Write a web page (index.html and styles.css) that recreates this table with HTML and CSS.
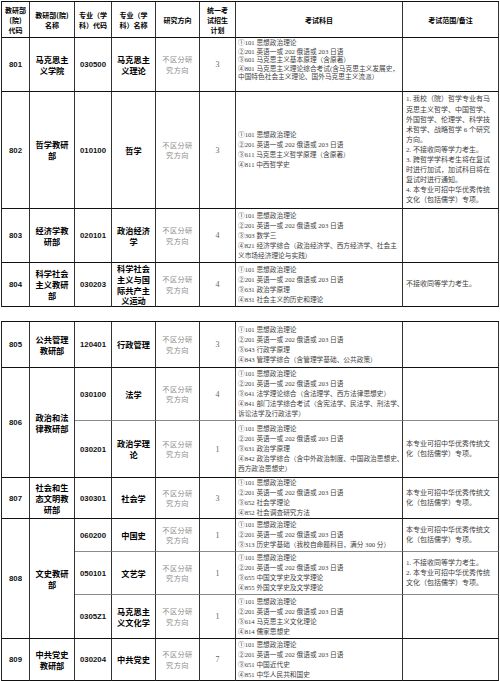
FILE: index.html
```html
<!DOCTYPE html>
<html lang="zh-CN">
<head>
<meta charset="utf-8">
<title>考试科目</title>
<link rel="stylesheet" href="styles.css">
</head>
<body>
<table class="grid first">
<colgroup>
<col class="c1"><col class="c2"><col class="c3"><col class="c4"><col class="c5"><col class="c6"><col class="c7"><col class="c8">
</colgroup>
<tr class="h36">
<th>教研部<br>(院)<br>代码</th>
<th>教研部(院)<br>名称</th>
<th>专业（学<br>科）代码</th>
<th>专业（学<br>科）名称</th>
<th>研究方向</th>
<th>统一考<br>试招生<br>计划</th>
<th>考试科目</th>
<th>考试范围/备注</th>
</tr>
<tr class="h54">
<td class="code">801</td>
<td class="name">马克思主<br>义学院</td>
<td class="code">030500</td>
<td class="name">马克思主<br>义理论</td>
<td class="dir">不区分研<br>究方向</td>
<td class="num">3</td>
<td class="subj tight">①101 思想政治理论<br>②201 英语一或 202 俄语或 203 日语<br>③601 马克思主义基本原理（含原著）<br>④801 马克思主义理论综合考试(含马克思主义发展史，<br>中国特色社会主义理论、国外马克思主义流派）</td>
<td class="note"></td>
</tr>
<tr class="h117">
<td class="code">802</td>
<td class="name">哲学教研<br>部</td>
<td class="code">010100</td>
<td class="name">哲学</td>
<td class="dir">不区分研<br>究方向</td>
<td class="num">3</td>
<td class="subj">①101 思想政治理论<br>②201 英语一或 202 俄语或 203 日语<br>③611 马克思主义哲学原理（含原著）<br>④811 中西哲学史</td>
<td class="note">1. 我校（院）哲学专业有马<br>克思主义哲学、中国哲学、<br>外国哲学、伦理学、科学技<br>术哲学、战略哲学 6 个研究<br>方向。<br>2. 不接收同等学力考生。<br>3. 跨哲学学科考生将在复试<br>时进行加试，加试科目将在<br>复试时进行通知。<br>4. 本专业可招中华优秀传统<br>文化（包括儒学）专项。</td>
</tr>
<tr class="h54">
<td class="code">803</td>
<td class="name">经济学教<br>研部</td>
<td class="code">020101</td>
<td class="name">政治经济<br>学</td>
<td class="dir">不区分研<br>究方向</td>
<td class="num">4</td>
<td class="subj">①101 思想政治理论<br>②201 英语一或 202 俄语或 203 日语<br>③303 数学三<br>④821 经济学综合（政治经济学、西方经济学、社会主<br>义市场经济理论与实践）</td>
<td class="note"></td>
</tr>
<tr class="h44">
<td class="code">804</td>
<td class="name">科学社会<br>主义教研<br>部</td>
<td class="code">030203</td>
<td class="name dense">科学社会<br>主义与国<br>际共产主<br>义运动</td>
<td class="dir">不区分研<br>究方向</td>
<td class="num">4</td>
<td class="subj">①101 思想政治理论<br>②201 英语一或 202 俄语或 203 日语<br>③631 政治学原理<br>④831 社会主义的历史和理论</td>
<td class="note">不接收同等学力考生。</td>
</tr>
</table>

<table class="grid second">
<colgroup>
<col class="c1"><col class="c2"><col class="c3"><col class="c4"><col class="c5"><col class="c6"><col class="c7"><col class="c8">
</colgroup>
<tr class="h46">
<td class="code">805</td>
<td class="name">公共管理<br>教研部</td>
<td class="code">120401</td>
<td class="name">行政管理</td>
<td class="dir">不区分研<br>究方向</td>
<td class="num">3</td>
<td class="subj">①101 思想政治理论<br>②201 英语一或 202 俄语或 203 日语<br>③643 行政学原理<br>④843 管理学综合（含管理学基础、公共政策）</td>
<td class="note"></td>
</tr>
<tr class="h53">
<td class="code" rowspan="2">806</td>
<td class="name" rowspan="2">政治和法<br>律教研部</td>
<td class="code sub">030100</td>
<td class="name sub">法学</td>
<td class="dir sub">不区分研<br>究方向</td>
<td class="num sub">4</td>
<td class="subj sub">①101 思想政治理论<br>②201 英语一或 202 俄语或 203 日语<br>③641 法学理论综合（含法理学、西方法律思想史）<br>④841 部门法学综合考试（含宪法学、民法学、刑法学、<br>诉讼法学及行政法学）</td>
<td class="note sub"></td>
</tr>
<tr class="h57">
<td class="code">030201</td>
<td class="name">政治学理<br>论</td>
<td class="dir">不区分研<br>究方向</td>
<td class="num">1</td>
<td class="subj">①101 思想政治理论<br>②201 英语一或 202 俄语或 203 日语<br>③631 政治学原理<br>④842 政治学综合（含中外政治制度、中国政治思想史、<br>西方政治思想史）</td>
<td class="note">本专业可招中华优秀传统文<br>化（包括儒学）专项。</td>
</tr>
<tr class="h41">
<td class="code">807</td>
<td class="name">社会和生<br>态文明教<br>研部</td>
<td class="code">030301</td>
<td class="name">社会学</td>
<td class="dir">不区分研<br>究方向</td>
<td class="num">3</td>
<td class="subj">①101 思想政治理论<br>②201 英语一或 202 俄语或 203 日语<br>③652 社会学理论<br>④852 社会调查研究方法</td>
<td class="note">本专业可招中华优秀传统文<br>化（包括儒学）专项。</td>
</tr>
<tr class="h33">
<td class="code" rowspan="3">808</td>
<td class="name" rowspan="3">文史教研<br>部</td>
<td class="code sub">060200</td>
<td class="name sub">中国史</td>
<td class="dir sub">不区分研<br>究方向</td>
<td class="num sub">1</td>
<td class="subj sub">①101 思想政治理论<br>②201 英语一或 202 俄语或 203 日语<br>③313 历史学基础（我校自命题科目，满分 300 分）</td>
<td class="note sub">本专业可招中华优秀传统文<br>化（包括儒学）专项。</td>
</tr>
<tr class="h43">
<td class="code sub">050101</td>
<td class="name sub">文艺学</td>
<td class="dir sub">不区分研<br>究方向</td>
<td class="num sub">1</td>
<td class="subj sub">①101 思想政治理论<br>②201 英语一或 202 俄语或 203 日语<br>③655 中国文学史及文学理论<br>④855 外国文学史及文学理论</td>
<td class="note sub">1. 不接收同等学力考生。<br>2. 本专业可招中华优秀传统<br>文化（包括儒学）专项。</td>
</tr>
<tr class="h44">
<td class="code">0305Z1</td>
<td class="name">马克思主<br>义文化学</td>
<td class="dir">不区分研<br>究方向</td>
<td class="num">1</td>
<td class="subj">①101 思想政治理论<br>②201 英语一或 202 俄语或 203 日语<br>③614 马克思主义文化理论<br>④814 儒家思想史</td>
<td class="note"></td>
</tr>
<tr class="h42">
<td class="code">809</td>
<td class="name">中共党史<br>教研部</td>
<td class="code">030204</td>
<td class="name">中共党史</td>
<td class="dir">不区分研<br>究方向</td>
<td class="num">7</td>
<td class="subj">①101 思想政治理论<br>②201 英语一或 202 俄语或 203 日语<br>③651 中国近代史<br>④851 中华人民共和国史</td>
<td class="note"></td>
</tr>
</table>
</body>
</html>
```

FILE: styles.css
```css
html, body {
  margin: 0;
  padding: 0;
  background: #ffffff;
}

body {
  font-family: "Liberation Serif", "Noto Sans CJK SC", serif;
  color: #333;
}

.grid {
  border-collapse: separate;
  border-spacing: 0;
  table-layout: fixed;
  width: 498px;
  margin-left: 1px;
  border-top: 1px solid #111;
  border-left: 1px solid #222;
}

.first { margin-top: 1px; }
.second { margin-top: 14px; }

.c1 { width: 28px; }
.c2 { width: 45px; }
.c3 { width: 37px; }
.c4 { width: 44px; }
.c5 { width: 44px; }
.c6 { width: 36px; }
.c7 { width: 167px; }
.c8 { width: 96px; }

th, td {
  border-right: 1px solid #333;
  border-bottom: 1px solid #111;
  padding: 0;
  text-align: center;
  vertical-align: middle;
  overflow: visible;
  box-sizing: border-box;
}

td.sub { border-bottom-color: #8a8a8a; }

.h36 { height: 36px; }
.h54 { height: 54px; }
.h117 { height: 117px; }
.h44 { height: 44px; }
.h46 { height: 46px; }
.h53 { height: 53px; }
.h57 { height: 57px; }
.h41 { height: 41px; }
.h33 { height: 33px; }
.h43 { height: 43px; }
.h42 { height: 42px; }

th {
  font-family: "Noto Sans CJK SC", sans-serif;
  font-weight: 700;
  font-size: 7px;
  line-height: 10px;
  color: #000;
  white-space: nowrap;
}

.code {
  font-family: "Liberation Sans", "Noto Sans CJK SC", sans-serif;
  font-weight: 700;
  font-size: 7.8px;
  color: #111;
}

.name {
  font-family: "Noto Sans CJK SC", sans-serif;
  font-weight: 700;
  font-size: 8.2px;
  line-height: 11px;
  color: #000;
  white-space: nowrap;
}

.name.dense { line-height: 10.6px; }

.dir {
  font-family: "Noto Sans CJK SC", sans-serif;
  font-size: 7.2px;
  line-height: 10.5px;
  letter-spacing: 0.4px;
  color: #8c8c8c;
  white-space: nowrap;
}

.num {
  font-family: "Liberation Serif", serif;
  font-size: 8px;
  color: #666;
}

.subj {
  text-align: left;
  padding-left: 2px;
  font-size: 6.7px;
  line-height: 10px;
  color: #3e3e3e;
  white-space: nowrap;
}

.subj.tight {
  vertical-align: top;
  padding-top: 1px;
  line-height: 8.5px;
}

.note {
  text-align: left;
  padding-left: 3px;
  font-size: 7px;
  line-height: 10.1px;
  color: #3e3e3e;
  white-space: nowrap;
}
```
